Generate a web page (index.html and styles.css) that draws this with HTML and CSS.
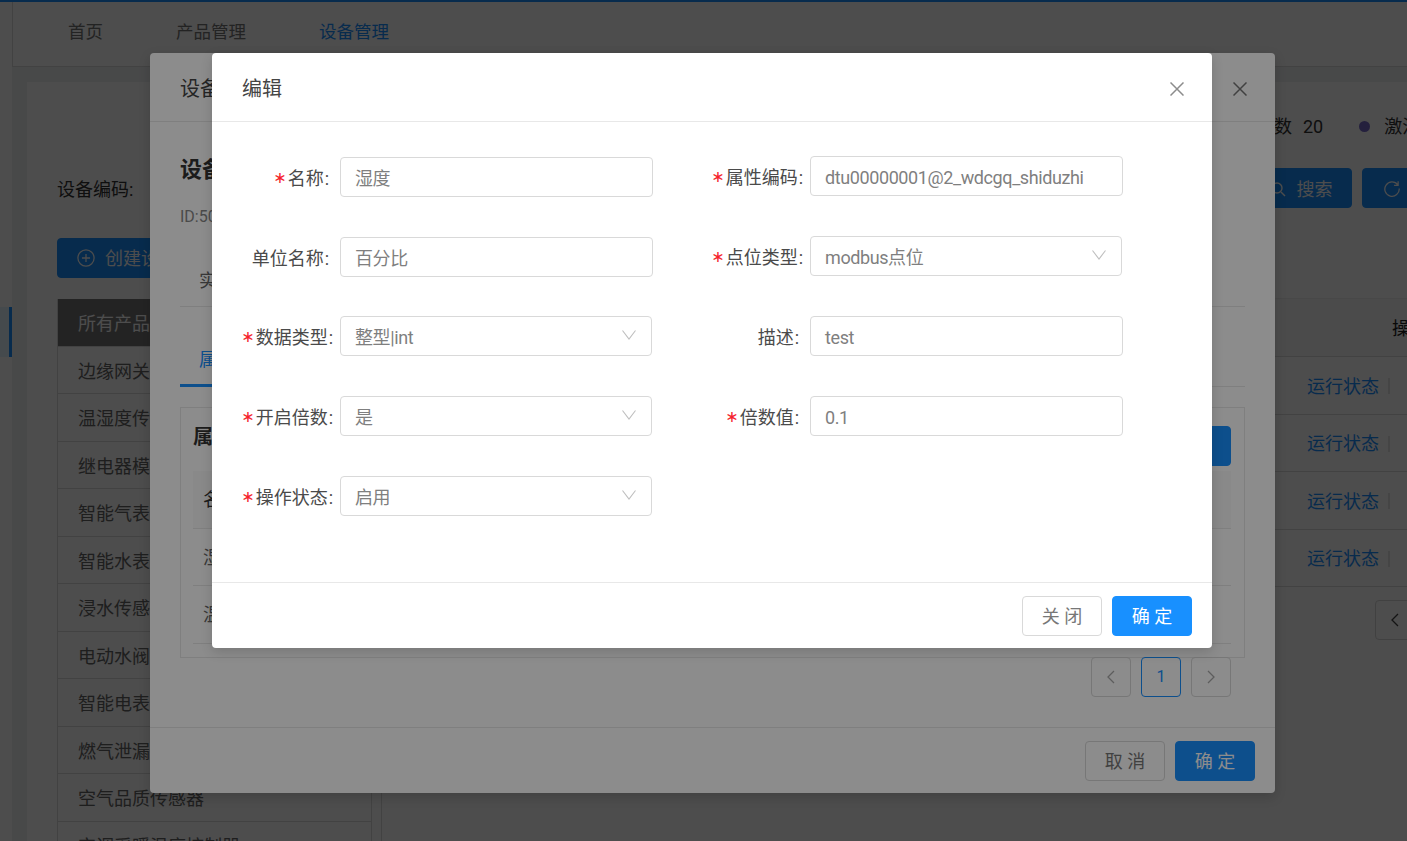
FILE: index.html
```html
<!DOCTYPE html>
<html lang="zh-CN">
<head>
<meta charset="utf-8">
<title>设备管理</title>
<link rel="stylesheet" href="styles.css">
</head>
<body>
<div class="app">
  <aside class="rail"><div class="rail-active"></div></aside>
  <div class="main">
    <nav class="nav">
      <a class="nav-item">首页</a>
      <a class="nav-item">产品管理</a>
      <a class="nav-item nav-on">设备管理</a>
    </nav>
    <div class="content">
      <section class="card">
        <div class="inner">
          <div class="stats">
            <span>设备总数</span><span class="stat-num">20</span>
            <i class="dot"></i><span>激活数</span>
          </div>
          <div class="filter">
            <span class="filter-label">设备编码:</span>
            <button class="btn btn-primary btn-search">
              <svg class="ico" viewBox="0 0 16 16"><circle cx="7" cy="7" r="5" /><path d="M11 11l4 4"/></svg>搜索
            </button>
            <button class="btn btn-primary btn-reset">
              <svg class="ico ico-lg" viewBox="0 0 20 20"><path d="M16.5 6.5A8 8 0 1 0 18 10.500M16.800 2.500v4.500h-4.500"/></svg>
            </button>
          </div>
          <button class="btn btn-primary btn-create">
            <svg class="ico ico-lg" viewBox="0 0 20 20"><circle cx="10" cy="10" r="9"/><path d="M10 5.500v9M5.500 10h9"/></svg>创建设备
          </button>
          <div class="split">
            <ul class="products">
              <li class="prod prod-head">所有产品</li>
              <li class="prod">边缘网关</li>
              <li class="prod">温湿度传感器</li>
              <li class="prod">继电器模块</li>
              <li class="prod">智能气表</li>
              <li class="prod">智能水表</li>
              <li class="prod">浸水传感器</li>
              <li class="prod">电动水阀</li>
              <li class="prod">智能电表</li>
              <li class="prod">燃气泄漏传感器</li>
              <li class="prod">空气品质传感器</li>
              <li class="prod">空调采暖温度控制器</li>
            </ul>
            <div class="devices">
              <div class="trow thead"><span>设备名称</span><span class="th-op">操作</span></div>
              <div class="trow"><span>设备一</span><span class="op"><a class="link">运行状态</a><i class="sep"></i></span></div>
              <div class="trow"><span>设备二</span><span class="op"><a class="link">运行状态</a><i class="sep"></i></span></div>
              <div class="trow"><span>设备三</span><span class="op"><a class="link">运行状态</a><i class="sep"></i></span></div>
              <div class="trow"><span>设备四</span><span class="op"><a class="link">运行状态</a><i class="sep"></i></span></div>
              <div class="pager page-pager">
                <span class="pg"><svg class="chev" viewBox="0 0 12 16"><path d="M9 2L3 8l6 6"/></svg></span>
              </div>
            </div>
          </div>
        </div>
      </section>
    </div>
  </div>
</div>

<div class="mask"></div>
<div class="modal modal-detail">
  <header class="modal-head">
    <span>设备详情</span>
    <svg class="close" viewBox="0 0 14 14"><path d="M.5.500l13 13M13.500.500l-13 13"/></svg>
  </header>
  <div class="detail-body">
    <h2 class="detail-title">设备详情</h2>
    <div class="detail-id">ID:50</div>
    <div class="tabs tabs-a"><span class="tab">实时数据</span></div>
    <div class="tabs tabs-b"><span class="tab tab-on">属性</span></div>
    <div class="attr-box">
      <div class="attr-top"><strong class="attr-title">属性列表</strong><button class="btn btn-primary btn-add">新增</button></div>
      <div class="attr-row attr-head">名称</div>
      <div class="attr-row">湿度</div>
      <div class="attr-row">温度</div>
    </div>
    <div class="pager">
      <span class="pg pg-dim"><svg class="chev" viewBox="0 0 12 16"><path d="M9 2L3 8l6 6"/></svg></span>
      <span class="pg pg-on">1</span>
      <span class="pg pg-dim"><svg class="chev" viewBox="0 0 12 16"><path d="M3 2l6 6-6 6"/></svg></span>
    </div>
  </div>
  <footer class="modal-foot">
    <button class="btn btn-default">取 消</button>
    <button class="btn btn-primary">确 定</button>
  </footer>
</div>

<div class="mask"></div>
<div class="modal modal-edit">
  <header class="modal-head modal-head-edit">
    <span>编辑</span>
    <svg class="close close-light" viewBox="0 0 14 14"><path d="M.5.500l13 13M13.500.500l-13 13"/></svg>
  </header>
  <form class="form">
    <div class="col col-left">
      <div class="field"><label class="label"><em class="req">∗</em>名称<span class="colon">:</span></label><div class="control">湿度</div></div>
      <div class="field"><label class="label">单位名称<span class="colon">:</span></label><div class="control">百分比</div></div>
      <div class="field field-up"><label class="label label-wide"><em class="req">∗</em>数据类型<span class="colon">:</span></label><div class="control control-select">整型|int<svg class="arrow" viewBox="0 0 14 10"><path d="M.5.500L7 9l6.500-8.500"/></svg></div></div>
      <div class="field"><label class="label label-wide"><em class="req">∗</em>开启倍数<span class="colon">:</span></label><div class="control control-select">是<svg class="arrow" viewBox="0 0 14 10"><path d="M.5.500L7 9l6.500-8.500"/></svg></div></div>
      <div class="field"><label class="label label-wide"><em class="req">∗</em>操作状态<span class="colon">:</span></label><div class="control control-select">启用<svg class="arrow" viewBox="0 0 14 10"><path d="M.5.500L7 9l6.500-8.500"/></svg></div></div>
    </div>
    <div class="col col-right">
      <div class="field"><label class="label label-wide"><em class="req">∗</em>属性编码<span class="colon">:</span></label><div class="control">dtu00000001@2_wdcgq_shiduzhi</div></div>
      <div class="field"><label class="label label-wide"><em class="req">∗</em>点位类型<span class="colon">:</span></label><div class="control control-select">modbus点位<svg class="arrow" viewBox="0 0 14 10"><path d="M.5.500L7 9l6.500-8.500"/></svg></div></div>
      <div class="field"><label class="label">描述<span class="colon">:</span></label><div class="control">test</div></div>
      <div class="field"><label class="label"><em class="req">∗</em>倍数值<span class="colon">:</span></label><div class="control">0.1</div></div>
    </div>
  </form>
  <footer class="modal-foot">
    <button class="btn btn-default">关 闭</button>
    <button class="btn btn-primary">确 定</button>
  </footer>
</div>
</body>
</html>
```

FILE: styles.css
```css
* { box-sizing: border-box; }
html, body { margin: 0; height: 100%; }
body {
  position: relative;
  height: 841px;
  overflow: hidden;
  background: #fff;
  color: #333;
  font: 18px/1.5 Roboto, "Noto Sans CJK SC", sans-serif;
}
ul { list-style: none; margin: 0; padding: 0; }
em, i { font-style: normal; }
svg { fill: none; stroke: currentColor; }

.app { display: flex; height: 841px; border-top: 2px solid #1890ff; }
.rail { width: 12px; flex: none; padding-top: 305px; }
.rail-active { height: 50px; background: #e6f7ff; border-right: 3px solid #1890ff; }
.main { flex: 1; min-width: 0; display: flex; flex-direction: column; }

.nav {
  height: 65px; flex: none;
  display: flex; align-items: center;
  padding: 0 0 4px 55px;
  gap: 73px;
  border-left: 1px solid #ddd;
  border-bottom: 1px solid #ddd;
  font-size: 17.500px;
}
.nav-item { color: #777; }
.nav-on { color: #1890ff; }

.content { flex: 1; min-height: 0; background: #f0f2f5; padding: 15px 0 0 15px; }
.card { height: 100%; background: #fff; overflow: hidden; padding-left: 30px; }
.inner { width: 1395px; padding-top: 32px; }

.stats { display: flex; align-items: center; height: 24px; padding-left: 1163px; color: #333; white-space: nowrap; }
.stat-num { margin-left: 11px; }
.dot { width: 11px; height: 11px; border-radius: 50%; background: #7a6ccc; margin: 0 14px 0 36px; }

.filter { display: flex; align-items: center; margin-top: 30px; height: 40px; }
.filter-label { color: #333; padding-top: 2px; }
.btn {
  height: 40px; width: 80px; padding: 0;
  display: inline-flex; align-items: center; justify-content: center;
  border-radius: 4px; border: 1px solid #d9d9d9;
  font: inherit; cursor: pointer;
  white-space: nowrap;
}
.btn-primary { background: #1890ff; border-color: #1890ff; color: #fff; }
.btn-default { background: #fff; color: #777; }
.btn-search { width: 102px; margin-left: auto; gap: 11px; padding-top: 2px; }
.btn-reset { width: 90px; margin-left: 10px; justify-content: flex-start; padding-left: 20px; }
.btn-create { width: 150px; margin-top: 30px; gap: 10px; justify-content: flex-start; padding-left: 19px; }
.ico { width: 16px; height: 16px; stroke-width: 1.4; }
.ico-lg { width: 18px; height: 18px; }

.split { display: flex; margin-top: 20px; gap: 9px; height: 560px; }
.products { width: 315px; flex: none; border-left: 1px solid #ddd; border-right: 1px solid #ddd; margin-top: 1px; }
.prod { height: 47.5px; padding-left: 20px; line-height: 49px; border-bottom: 1px solid #ddd; color: #666; white-space: nowrap; }
.prod-head { background: #777; color: #fff; }
.devices { flex: 1; border-left: 1px solid #ddd; }
.trow {
  display: grid; grid-template-columns: 925px 1fr; align-items: center;
  height: 57.500px; padding-top: 2px; border-bottom: 1px solid #ddd; white-space: nowrap;
}
.thead { background: #fafafa; height: 59px; border-top: 1px solid #eee; color: #222; }
.th-op { padding-left: 85px; }
.op { display: flex; align-items: center; }
.link { color: #1890ff; }
.sep { width: 2px; height: 16px; background: #e8e8e8; margin-left: 9px; }

.page-pager { margin-top: 13px; padding-left: 993px; }

.mask { position: absolute; inset: 0; background: rgba(0, 0, 0, .45); }
.modal {
  position: absolute; top: 53px;
  display: flex; flex-direction: column;
  background: #fff; border-radius: 4px;
  box-shadow: 0 4px 12px rgba(0, 0, 0, .15);
}
.modal-detail { left: 150px; width: 1125px; height: 740px; }
.modal-edit { left: 212px; width: 1000px; height: 595px; }
.modal-head {
  height: 69px; flex: none;
  display: flex; align-items: center; justify-content: space-between;
  padding: 4px 28px 0 30px;
  border-bottom: 1px solid #e8e8e8;
  color: #444;
  font-size: 20px;
}
.close { width: 14px; height: 14px; stroke: #777; stroke-width: 1.5; margin-top: -1px; }
.close-light { stroke: #8c8c8c; }
.modal-foot {
  height: 66px; flex: none; margin-top: auto;
  display: flex; justify-content: flex-end; gap: 10px;
  padding: 13px 20px 0;
  border-top: 1px solid #e8e8e8;
  white-space: pre;
}

.detail-body { flex: 1; padding: 30px 30px 0; min-height: 0; }
.detail-title { margin: 0; font-size: 22px; line-height: 36px; color: #333; }
.detail-id { margin-top: 17px; font-size: 16px; line-height: 24px; color: #888; }
.tabs { border-bottom: 1px solid #e8e8e8; }
.tabs-a { margin-top: 38px; height: 40px; }
.tabs-b { height: 80px; padding-top: 39px; }
.tab { display: block; width: 110px; padding-left: 19px; color: #666; line-height: 27px; }
.tab-on { color: #1890ff; height: 41px; border-bottom: 3px solid #1890ff; }
.attr-box { height: 251px; margin-top: 20px; border: 1px solid #e8e8e8; padding: 18px 13px 0 12px; }
.attr-top { display: flex; justify-content: space-between; align-items: flex-start; height: 40px; }
.attr-title { font-size: 20px; line-height: 24px; margin-top: -1px; color: #333; }
.btn-add { width: 100px; }
.attr-row { height: 57.500px; line-height: 58px; padding-left: 10px; border-bottom: 1px solid #e8e8e8; color: #666; }
.attr-head { margin-top: 5px; background: #fafafa; color: #333; }
.pager { display: flex; justify-content: flex-end; gap: 10px; margin-top: -1px; margin-right: 14px; }
.page-pager { justify-content: flex-start; margin-top: 13px; margin-right: 0; }
.pg {
  width: 40px; height: 40px; flex: none;
  display: flex; align-items: center; justify-content: center;
  border: 1px solid #d9d9d9; border-radius: 4px; color: #444;
}
.pg-dim { color: #aaa; }
.pg-on { border-color: #1890ff; color: #1890ff; font-size: 16px; }
.chev { width: 12px; height: 16px; stroke-width: 1.3; }

.form { flex: 1; display: flex; min-height: 0; }
.col { display: flex; flex-direction: column; gap: 40px; }
.col-left { width: 470px; padding-top: 35px; }
.col-right { width: 470px; padding-top: 34px; }
.field { display: flex; height: 40px; }
.field-up { margin-top: -1px; }
.label {
  flex: none; width: 128px;
  display: flex; align-items: center; justify-content: flex-end;
  padding: 2px 11px 0 0; color: #4a4a4a; white-space: nowrap;
}
.label-wide { padding-right: 7px; }
.colon { margin-left: 1px; }
.req { color: #f5222d; font: 16px/1 "DejaVu Sans", sans-serif; margin-right: 1px; }
.control {
  width: 313px;
  display: flex; align-items: center; justify-content: space-between;
  padding: 2px 15px 0 14px;
  border: 1px solid #d9d9d9; border-radius: 4px;
  color: #7f7f7f; white-space: nowrap;
  letter-spacing: -.4px;
}
.control-select { width: 312px; }
.arrow { width: 14px; height: 10px; stroke: #bfbfbf; stroke-width: 1.1; margin-top: -5px; }
```
